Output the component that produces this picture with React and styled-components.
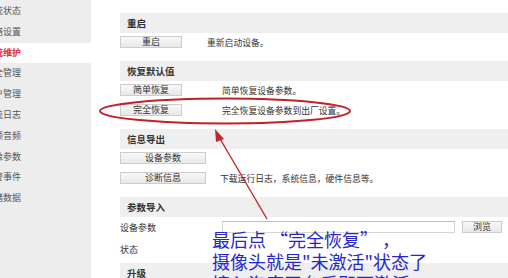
import React from "react";
import styled, { createGlobalStyle } from "styled-components";

const GlobalStyle = createGlobalStyle`
    html, body {
        margin: 0;
        padding: 0;
        background: #ffffff;
        overflow: hidden;
    }
    body {
        font-family: "Noto Sans CJK SC", "Noto Sans", sans-serif;
        color: #333333;
    }
`;

const Page = styled.div`
    position: relative;
    width: 508px;
    height: 278px;
    overflow: hidden;
    display: flex;
    flex-flow: row nowrap;
    background: #ffffff;
`;

const Sidebar = styled.div`
    width: 91px;
    flex: none;
    background: #ededed;
    padding-top: 1px;
    display: flex;
    flex-flow: column nowrap;
`;

const NavItem = styled.div`
    height: 20.8px;
    line-height: 20px;
    font-size: 9px;
    white-space: nowrap;
    text-indent: -15px;
    color: ${(p) => (p.$active ? "#e0303a" : "#555555")};
    background: ${(p) => (p.$active ? "#ffffff" : "transparent")};
    font-weight: ${(p) => (p.$active ? "bold" : "normal")};
`;

const Main = styled.div`
    flex: 1;
    margin-left: 29px;
    padding-top: 13px;
    display: flex;
    flex-flow: column nowrap;
    min-width: 0;
`;

const Section = styled.div`
    display: flex;
    flex-flow: column nowrap;
    gap: 8px;
    margin-bottom: ${(p) => p.$after || 13}px;
`;

const Header = styled.div`
    height: 20px;
    line-height: 20px;
    background: #efefef;
    padding-left: 7px;
    font-size: 9.5px;
    font-weight: bold;
    color: #333333;
    margin-bottom: -5px;
`;

const Row = styled.div`
    display: flex;
    flex-flow: row nowrap;
    align-items: center;
    height: ${(p) => p.$h || 12}px;
`;

const Button = styled.div`
    box-sizing: border-box;
    width: ${(p) => p.$w || 62}px;
    height: 12px;
    flex: none;
    border: 1px solid #cdcdcd;
    background: linear-gradient(#f8f8f8, #e8e8e8);
    font-size: 9px;
    line-height: 10px;
    text-align: center;
    color: #333333;
`;

const Desc = styled.span`
    margin-left: ${(p) => p.$indent}px;
    font-size: 8.8px;
    white-space: nowrap;
    color: #333333;
`;

const Label = styled.span`
    width: 102px;
    flex: none;
    font-size: 9px;
    color: #333333;
`;

const Input = styled.div`
    box-sizing: border-box;
    width: 233px;
    height: 12px;
    flex: none;
    border: 1px solid #d6d6d6;
    border-top-color: #bdbdbd;
    background: #ffffff;
`;

const SmallButton = styled(Button)`
    width: 40px;
    margin-left: 7px;
`;

const Overlay = styled.svg`
    position: absolute;
    left: 0;
    top: 0;
    width: 508px;
    height: 278px;
    pointer-events: none;
`;

const Note = styled.div`
    position: absolute;
    left: 212px;
    top: 228px;
    font-family: "Noto Sans CJK SC", sans-serif;
    font-size: 18px;
    line-height: 22px;
    color: #2626cc;
    white-space: nowrap;
`;

const navItems = [
    "系统状态",
    "网络设置",
    "系统维护",
    "安全管理",
    "用户管理",
    "系统日志",
    "视频音频",
    "图像参数",
    "报警事件",
    "存储数据",
];

export default function App() {
    return (
        <>
            <GlobalStyle />
            <Page>
                <Sidebar>
                    {navItems.map((item, i) => (
                        <NavItem key={item} $active={i === 2}>
                            {item}
                        </NavItem>
                    ))}
                </Sidebar>
                <Main>
                    <Section>
                        <Header>重启</Header>
                        <Row>
                            <Button>重启</Button>
                            <Desc $indent={25}>重新启动设备。</Desc>
                        </Row>
                    </Section>
                    <Section>
                        <Header>恢复默认值</Header>
                        <Row>
                            <Button>简单恢复</Button>
                            <Desc $indent={40}>简单恢复设备参数。</Desc>
                        </Row>
                        <Row>
                            <Button>完全恢复</Button>
                            <Desc $indent={40}>完全恢复设备参数到出厂设置。</Desc>
                        </Row>
                    </Section>
                    <Section>
                        <Header>信息导出</Header>
                        <Row>
                            <Button $w={86}>设备参数</Button>
                        </Row>
                        <Row>
                            <Button $w={86}>诊断信息</Button>
                            <Desc $indent={14}>下载运行日志，系统信息，硬件信息等。</Desc>
                        </Row>
                    </Section>
                    <Section $after={7}>
                        <Header>参数导入</Header>
                        <Row $h={14}>
                            <Label>设备参数</Label>
                            <Input />
                            <SmallButton>浏览</SmallButton>
                            <SmallButton>导入</SmallButton>
                        </Row>
                        <Row $h={14}>
                            <Label>状态</Label>
                        </Row>
                    </Section>
                    <Section>
                        <Header>升级</Header>
                    </Section>
                </Main>

                <Overlay viewBox="0 0 508 278">
                    <ellipse cx="225" cy="111" rx="125" ry="12.5" fill="none" stroke="#c52028" strokeWidth="2" />
                    <line x1="267" y1="219" x2="219" y2="137" stroke="#c0282e" strokeWidth="1.4" />
                    <polygon points="215,129 224,139 216,142" fill="#c0282e" />
                </Overlay>
                <Note>
                    最后点 “完全恢复” ，
                    <br />
                    摄像头就是"未激活"状态了
                    <br />
                    接入海康平台后即可激活
                </Note>
            </Page>
        </>
    );
}
